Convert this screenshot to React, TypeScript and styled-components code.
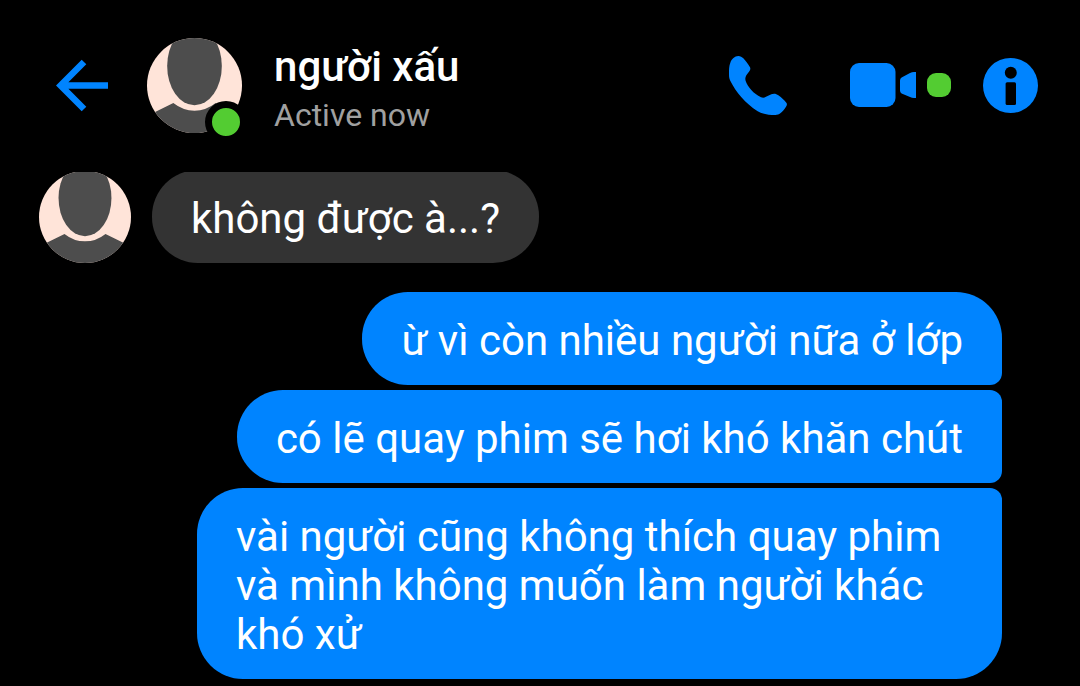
import React, { useId } from "react";
import styled, { createGlobalStyle } from "styled-components";

const BLUE = "#0084ff";
const GREEN = "#53cc32";

const GlobalStyle = createGlobalStyle`
  *, *::before, *::after { box-sizing: border-box; }
  body {
    margin: 0;
    background: #000;
    color: #fff;
    font-family: Roboto, "Noto Sans", sans-serif;
  }
  h1, p { margin: 0; }
`;

const Screen = styled.main`
  display: flex;
  flex-direction: column;
  width: 100%;
  overflow: hidden;
`;

const Header = styled.header`
  display: flex;
  align-items: center;
  padding: 38px 42px 39px 56px;
`;

const IconButton = styled.button`
  display: flex;
  align-items: center;
  flex: none;
  gap: 11px;
  padding: 0;
  border: 0;
  background: none;
  color: ${BLUE};
  cursor: pointer;
`;

const Actions = styled.nav`
  display: flex;
  align-items: center;
  margin-left: auto;
`;

const VideoButton = styled(IconButton)`
  margin: 0 32px 0 63px;
`;

const AvatarFrame = styled.div<{ $size: number }>`
  position: relative;
  flex: none;
  width: ${(p) => p.$size}px;
  height: ${(p) => p.$size}px;

  svg {
    display: block;
    width: 100%;
    height: 100%;
  }
`;

const OnlineBadge = styled.span`
  position: absolute;
  right: -5px;
  bottom: -10px;
  width: 42px;
  height: 42px;
  border: 7px solid #000;
  border-radius: 50%;
  background: ${GREEN};
`;

const VideoDot = styled.span`
  width: 24px;
  height: 24px;
  margin-bottom: 1px;
  border-radius: 9px;
  background: ${GREEN};
`;

const Contact = styled.div`
  display: flex;
  align-items: center;
  gap: 32px;
  margin-left: 39px;
  min-width: 0;
`;

const ContactText = styled.div`
  display: flex;
  flex-direction: column;
  gap: 9px;
  padding-top: 8px;
`;

const Name = styled.h1`
  font-size: 42px;
  font-weight: 500;
  line-height: 42px;
`;

const Status = styled.p`
  color: #a0a0a0;
  font-size: 32px;
  line-height: 36px;
`;

const Thread = styled.section`
  display: flex;
  flex-direction: column;
  gap: 29px;
  padding: 0 78px 7px 39px;
  overflow: hidden;
`;

const IncomingRow = styled.div`
  display: flex;
  align-items: flex-end;
  gap: 21px;
  margin-top: -2px;
`;

const OutgoingGroup = styled.div`
  display: flex;
  flex-direction: column;
  align-items: flex-end;
  gap: 5px;
`;

type Place = "single" | "first" | "middle" | "last";

const corners: Record<Place, string> = {
  single: "46px",
  first: "46px 46px 12px 46px",
  middle: "46px 12px 12px 46px",
  last: "46px 12px 46px 46px",
};

const Bubble = styled.p<{ $own?: boolean; $place: Place }>`
  max-width: calc(100% - 158px);
  padding: 24px 39px 20px;
  border-radius: ${(p) => corners[p.$place]};
  background: ${(p) => (p.$own ? BLUE : "#333")};
  font-size: 42px;
  line-height: 49px;
`;

function Avatar({ size, online }: { size: number; online?: boolean }) {
  const clip = useId();
  return (
    <AvatarFrame $size={size}>
      <svg viewBox="0 0 285 285" aria-hidden="true">
        <clipPath id={clip}>
          <circle cx="142.5" cy="142.5" r="142.5" />
        </clipPath>
        <g clipPath={`url(#${clip})`}>
          <rect width="285" height="285" fill="#ffe4d9" />
          <g fill="#4d4d4d">
            <ellipse cx="142.5" cy="84" rx="82" ry="118" />
            <path d="M0 234 L79 195 Q108 218 142.5 218 Q177 218 206 195 L285 234 V285 H0Z" />
          </g>
        </g>
      </svg>
      {online && <OnlineBadge />}
    </AvatarFrame>
  );
}

const BackIcon = () => (
  <svg width="52" height="53" viewBox="0 0 52 53" fill="none" stroke="currentColor" strokeWidth="6.5" aria-hidden="true">
    <path d="M28 3 L4.6 26.5 L28 50 M5 26.5 H52" />
  </svg>
);

const PhoneIcon = () => (
  <svg width="58" height="59" viewBox="0 0 174 177" fill="currentColor" aria-hidden="true">
    <path d="M28 0 C34 0 39 3 43 7 C51 16 58 25 63 34 C65 38 64 42 61 46 L52 58 C49 63 48 68 50 75 C56 93 74 113 96 124 C101 126 106 126 111 122 L127 115 C134 112 142 113 148 118 C158 125 166 133 172 140 C175 144 174 148 171 152 C166 160 160 167 154 172 C150 176 145 177 139 177 C121 177 100 174 86 166 C50 143 20 108 3 73 C0 66 0 60 0 52 C0 42 0 30 4 20 C8 9 17 0 28 0Z" />
  </svg>
);

const VideoIcon = () => (
  <svg width="66" height="45" viewBox="0 0 66 45" fill="currentColor" aria-hidden="true">
    <rect width="45.5" height="44" rx="9" />
    <path d="M50 17.5 Q50 15.5 51.6 14.6 L60 10 Q62 9 64 9 H66 V35 H64 Q62 35 60 34 L51.6 30.4 Q50 29.5 50 27.5Z" />
  </svg>
);

const InfoIcon = () => (
  <svg width="55" height="55" viewBox="0 0 55 55" aria-hidden="true">
    <circle cx="27.5" cy="27.5" r="27.5" fill="currentColor" />
    <circle cx="27.8" cy="14.7" r="6" fill="#000" />
    <rect x="22.6" y="24.3" width="10.4" height="22.7" rx="1.5" fill="#000" />
  </svg>
);

const replies: { text: string; place: Place }[] = [
  { text: "ừ vì còn nhiều người nữa ở lớp", place: "first" },
  { text: "có lẽ quay phim sẽ hơi khó khăn chút", place: "middle" },
  {
    text: "vài người cũng không thích quay phim và mình không muốn làm người khác khó xử",
    place: "last",
  },
];

export default function App() {
  return (
    <>
      <GlobalStyle />
      <Screen>
        <Header>
          <IconButton type="button" aria-label="Back">
            <BackIcon />
          </IconButton>
          <Contact>
            <Avatar size={95} online />
            <ContactText>
              <Name>người xấu</Name>
              <Status>Active now</Status>
            </ContactText>
          </Contact>
          <Actions>
            <IconButton type="button" aria-label="Voice call">
              <PhoneIcon />
            </IconButton>
            <VideoButton type="button" aria-label="Video call">
              <VideoIcon />
              <VideoDot />
            </VideoButton>
            <IconButton type="button" aria-label="Conversation info">
              <InfoIcon />
            </IconButton>
          </Actions>
        </Header>
        <Thread>
          <IncomingRow>
            <Avatar size={92} />
            <Bubble $place="single">không được à...?</Bubble>
          </IncomingRow>
          <OutgoingGroup>
            {replies.map((reply) => (
              <Bubble key={reply.place} $own $place={reply.place}>
                {reply.text}
              </Bubble>
            ))}
          </OutgoingGroup>
        </Thread>
      </Screen>
    </>
  );
}
